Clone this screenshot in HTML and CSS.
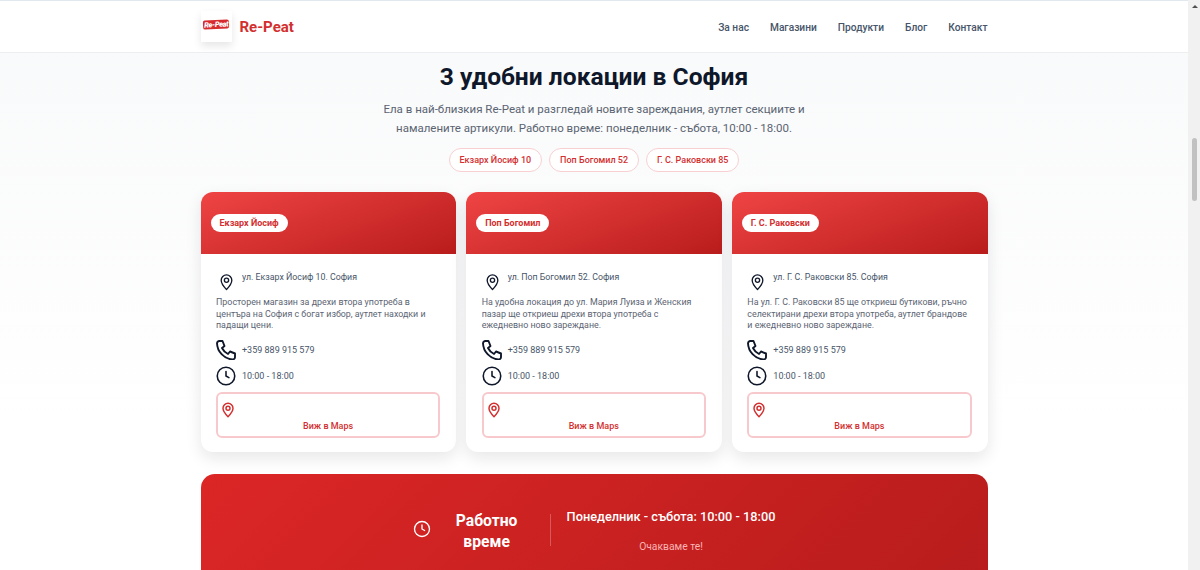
FILE: index.html
```html
<!DOCTYPE html>
<html lang="bg">
<head>
    <meta charset="UTF-8">
    <meta name="viewport" content="width=device-width, initial-scale=1.0">
    <title>Re-Peat - Магазини</title>
    <link rel="stylesheet" href="styles.css">
</head>
<body>

    <div class="page">
        <header class="site-header">
            <div class="wrap header-row">
                <a href="#" class="brand">
                    <span class="brand-logo"><span class="brand-mark">Re-Peat</span></span>
                    <span class="brand-name">Re-Peat</span>
                </a>
                <nav class="main-nav">
                    <a href="#">За нас</a>
                    <a href="#">Магазини</a>
                    <a href="#">Продукти</a>
                    <a href="#">Блог</a>
                    <a href="#">Контакт</a>
                </nav>
            </div>
        </header>

        <main class="wrap">
            <section class="intro">
                <h1>3 удобни локации в София</h1>
                <p>Ела в най-близкия Re-Peat и разгледай новите зареждания, аутлет секциите и<br>намалените артикули. Работно време: понеделник - събота, 10:00 - 18:00.</p>
                <div class="chips">
                    <a href="#" class="chip">Екзарх Йосиф 10</a>
                    <a href="#" class="chip">Поп Богомил 52</a>
                    <a href="#" class="chip">Г. С. Раковски 85</a>
                </div>
            </section>

            <section class="cards">
                <article class="card">
                    <div class="card-head"><span class="card-tag">Екзарх Йосиф</span></div>
                    <div class="card-body">
                        <div class="info-row address">
                            <svg class="icon" viewBox="0 0 24 24"><path d="M12 22.500s7.500-7.500 7.500-13a7.500 7.500 0 0 0-15 0c0 5.500 7.500 13 7.500 13z"/><circle cx="12" cy="9.500" r="3"/></svg>
                            <span>ул. Екзарх Йосиф 10. София</span>
                        </div>
                        <p class="card-text">Просторен магазин за дрехи втора употреба в центъра на София с богат избор, аутлет находки и падащи цени.</p>
                        <div class="info-row">
                            <svg class="icon" viewBox="2 2 20 20"><path d="M5 3h3.500l2 5-2.500 2a13 13 0 0 0 6 6l2-2.500 5 2V19a2.500 2.500 0 0 1-2.700 2.500A17 17 0 0 1 3 5.200 2.500 2.500 0 0 1 5 3z"/></svg>
                            <span>+359 889 915 579</span>
                        </div>
                        <div class="info-row">
                            <svg class="icon" viewBox="0 0 24 24"><circle cx="12" cy="12" r="10.500"/><path d="M12 6.500V12l3.500 2"/></svg>
                            <span>10:00 - 18:00</span>
                        </div>
                        <a href="#" class="maps-btn">
                            <svg class="icon-red" viewBox="0 0 24 24"><path d="M12 22s7.500-7.300 7.500-12.500a7.500 7.500 0 0 0-15 0C4.500 14.700 12 22 12 22z"/><circle cx="12" cy="9.500" r="3"/></svg>
                            <span>Виж в Maps</span>
                        </a>
                    </div>
                </article>

                <article class="card">
                    <div class="card-head"><span class="card-tag">Поп Богомил</span></div>
                    <div class="card-body">
                        <div class="info-row address">
                            <svg class="icon" viewBox="0 0 24 24"><path d="M12 22.500s7.500-7.500 7.500-13a7.500 7.500 0 0 0-15 0c0 5.500 7.500 13 7.500 13z"/><circle cx="12" cy="9.500" r="3"/></svg>
                            <span>ул. Поп Богомил 52. София</span>
                        </div>
                        <p class="card-text">На удобна локация до ул. Мария Луиза и Женския пазар ще откриеш дрехи втора употреба с ежедневно ново зареждане.</p>
                        <div class="info-row">
                            <svg class="icon" viewBox="2 2 20 20"><path d="M5 3h3.500l2 5-2.500 2a13 13 0 0 0 6 6l2-2.500 5 2V19a2.500 2.500 0 0 1-2.700 2.500A17 17 0 0 1 3 5.200 2.500 2.500 0 0 1 5 3z"/></svg>
                            <span>+359 889 915 579</span>
                        </div>
                        <div class="info-row">
                            <svg class="icon" viewBox="0 0 24 24"><circle cx="12" cy="12" r="10.500"/><path d="M12 6.500V12l3.500 2"/></svg>
                            <span>10:00 - 18:00</span>
                        </div>
                        <a href="#" class="maps-btn">
                            <svg class="icon-red" viewBox="0 0 24 24"><path d="M12 22s7.500-7.300 7.500-12.500a7.500 7.500 0 0 0-15 0C4.500 14.700 12 22 12 22z"/><circle cx="12" cy="9.500" r="3"/></svg>
                            <span>Виж в Maps</span>
                        </a>
                    </div>
                </article>

                <article class="card">
                    <div class="card-head"><span class="card-tag">Г. С. Раковски</span></div>
                    <div class="card-body">
                        <div class="info-row address">
                            <svg class="icon" viewBox="0 0 24 24"><path d="M12 22.500s7.500-7.500 7.500-13a7.500 7.500 0 0 0-15 0c0 5.500 7.500 13 7.500 13z"/><circle cx="12" cy="9.500" r="3"/></svg>
                            <span>ул. Г. С. Раковски 85. София</span>
                        </div>
                        <p class="card-text">На ул. Г. С. Раковски 85 ще откриеш бутикови, ръчно селектирани дрехи втора употреба, аутлет брандове и ежедневно ново зареждане.</p>
                        <div class="info-row">
                            <svg class="icon" viewBox="2 2 20 20"><path d="M5 3h3.500l2 5-2.500 2a13 13 0 0 0 6 6l2-2.500 5 2V19a2.500 2.500 0 0 1-2.700 2.500A17 17 0 0 1 3 5.200 2.500 2.500 0 0 1 5 3z"/></svg>
                            <span>+359 889 915 579</span>
                        </div>
                        <div class="info-row">
                            <svg class="icon" viewBox="0 0 24 24"><circle cx="12" cy="12" r="10.500"/><path d="M12 6.500V12l3.500 2"/></svg>
                            <span>10:00 - 18:00</span>
                        </div>
                        <a href="#" class="maps-btn">
                            <svg class="icon-red" viewBox="0 0 24 24"><path d="M12 22s7.500-7.300 7.500-12.500a7.500 7.500 0 0 0-15 0C4.500 14.700 12 22 12 22z"/><circle cx="12" cy="9.500" r="3"/></svg>
                            <span>Виж в Maps</span>
                        </a>
                    </div>
                </article>
            </section>

            <section class="hours">
                <svg class="hours-icon" viewBox="0 0 24 24"><circle cx="12" cy="12" r="10"/><path d="M12 6.500V12l3.500 2"/></svg>
                <h2>Работно<br>време</h2>
                <span class="hours-divider"></span>
                <div class="hours-info">
                    <div class="hours-time">Понеделник - събота: 10:00 - 18:00</div>
                    <div class="hours-note">Очакваме те!</div>
                </div>
            </section>
        </main>
    </div>

    <div class="scrollbar">
        <span class="scroll-arrow"></span>
        <span class="scroll-thumb"></span>
    </div>

</body>
</html>
```

FILE: styles.css
```css
* {
    box-sizing: border-box;
}

body {
    font-family: Roboto, "Noto Sans", sans-serif;
    background: #fff;
    margin: 0;
    height: 570px;
    overflow: hidden;
    display: flex;
    color: #0f172a;
}

a {
    text-decoration: none;
}

.page {
    flex: 1;
    min-width: 0;
    height: 570px;
    overflow: hidden;
    background: linear-gradient(180deg, #f8f9fa 0%, #fff 75%);
}

.wrap {
    width: 787px;
    margin: 0 auto;
}

/* Header */
.site-header {
    height: 53px;
    background: #fff;
    border-top: 1px solid #e2e8f0;
    border-bottom: 1px solid #eceef1;
}

.header-row {
    height: 100%;
    display: flex;
    justify-content: space-between;
    align-items: center;
}

.brand {
    display: flex;
    align-items: center;
    gap: 8px;
}

.brand-logo {
    width: 31px;
    height: 31px;
    background: #fff;
    box-shadow: 0 4px 8px rgba(0, 0, 0, 0.1);
    display: flex;
    align-items: center;
    justify-content: center;
}

.brand-mark {
    font-size: 7.500px;
    font-weight: 900;
    font-style: italic;
    letter-spacing: -0.4px;
    line-height: 9px;
    padding: 0 1px;
    margin-top: -4px;
    color: #fff;
    background: #d62a2f;
    border-radius: 2px;
    transform: rotate(-3deg);
    white-space: nowrap;
}

.brand-name {
    font-size: 15px;
    font-weight: 700;
    color: #d32f2f;
}

.main-nav {
    display: flex;
    gap: 21px;
    margin-top: 1px;
}

.main-nav a {
    font-size: 10.200px;
    font-weight: 500;
    color: #475569;
}

/* Intro */
.intro {
    text-align: center;
    padding-top: 7px;
}

h1 {
    margin: 0;
    font-size: 24.600px;
    line-height: 33px;
    font-weight: 700;
    color: #0f172a;
}

.intro p {
    margin: 7px 0 0;
    font-size: 11.500px;
    line-height: 18.500px;
    color: #5b6472;
}

.chips {
    display: flex;
    justify-content: center;
    gap: 7px;
    margin-top: 11px;
}

.chip {
    height: 24px;
    padding: 0 10px;
    display: flex;
    align-items: center;
    font-size: 9px;
    font-weight: 500;
    color: #d32f2f;
    background: #fff;
    border: 1px solid #f8d0d2;
    border-radius: 12px;
}

/* Cards */
.cards {
    display: grid;
    grid-template-columns: repeat(3, 1fr);
    gap: 10px;
    margin-top: 20px;
}

.card {
    height: 260px;
    background: #fff;
    border-radius: 12px;
    overflow: hidden;
    box-shadow: 0 6px 16px rgba(15, 23, 42, 0.1);
}

.card-head {
    height: 62px;
    padding: 22px 10px 0;
    display: flex;
    align-items: flex-start;
    background: linear-gradient(160deg, #ef4444, #b91c1c);
}

.card-tag {
    height: 18px;
    padding: 0 9px;
    font-size: 9px;
    line-height: 18px;
    font-weight: 700;
    color: #d32f2f;
    background: #fff;
    border-radius: 9px;
}

.card-body {
    padding: 18px 16px 0 15.500px;
}

.info-row {
    display: flex;
    align-items: center;
    gap: 6px;
    height: 20px;
    margin-bottom: 6px;
    font-size: 9px;
    color: #475569;
}

.info-row.address {
    align-items: flex-start;
    gap: 7px;
    padding-left: 2px;
    margin-bottom: 5px;
    font-size: 8.800px;
}

.info-row.address .icon {
    width: 17px;
    height: 20px;
}

.icon {
    width: 20px;
    height: 20px;
    flex-shrink: 0;
    fill: none;
    stroke: #0f172a;
    stroke-width: 1.900;
    stroke-linejoin: round;
    stroke-linecap: round;
}

.card-text {
    margin: 0 0 8px;
    font-size: 8.900px;
    line-height: 11.500px;
    color: #5b6472;
}

.maps-btn {
    height: 46px;
    margin-top: 1px;
    padding: 7px 2px 0;
    display: flex;
    flex-direction: column;
    align-items: flex-start;
    border: 2px solid #f8c9cc;
    border-radius: 6px;
    background: #fff;
}

.maps-btn span {
    align-self: center;
    margin-top: 2px;
    font-size: 9px;
    font-weight: 500;
    color: #d32f2f;
}

.icon-red {
    width: 16px;
    height: 18px;
    fill: none;
    stroke: #d32f2f;
    stroke-width: 2.200;
    stroke-linejoin: round;
}

/* Hours */
.hours {
    margin-top: 22px;
    height: 130px;
    padding-top: 36px;
    display: flex;
    align-items: flex-start;
    justify-content: center;
    color: #fff;
    background: linear-gradient(135deg, #dc2626, #b71c1c);
    border-radius: 14px;
}

.hours-icon {
    width: 18px;
    height: 18px;
    margin-top: 10px;
    fill: none;
    stroke: #fff;
    stroke-width: 1.800;
    stroke-linecap: round;
    stroke-linejoin: round;
}

.hours h2 {
    margin: 0 23px 0 16px;
    width: 80px;
    font-size: 15.700px;
    line-height: 21px;
    font-weight: 700;
    text-align: center;
}

.hours-divider {
    width: 1px;
    height: 32px;
    margin-top: 4px;
    background: rgba(255, 255, 255, 0.25);
}

.hours-info {
    padding-left: 16px;
    text-align: center;
}

.hours-time {
    font-size: 12.750px;
    font-weight: 500;
    line-height: 14px;
}

.hours-note {
    margin-top: 16px;
    font-size: 10.300px;
    color: #f8b4b4;
}

/* Scrollbar */
.scrollbar {
    width: 12px;
    height: 570px;
    background: #f1f1f1;
    position: relative;
}

.scroll-arrow {
    position: absolute;
    top: 5px;
    left: 4px;
    border-left: 3px solid transparent;
    border-right: 3px solid transparent;
    border-bottom: 3px solid #505050;
}

.scroll-thumb {
    position: absolute;
    top: 138px;
    left: 4px;
    width: 5px;
    height: 63px;
    background: #c1c1c1;
    border-radius: 3px;
}
```
